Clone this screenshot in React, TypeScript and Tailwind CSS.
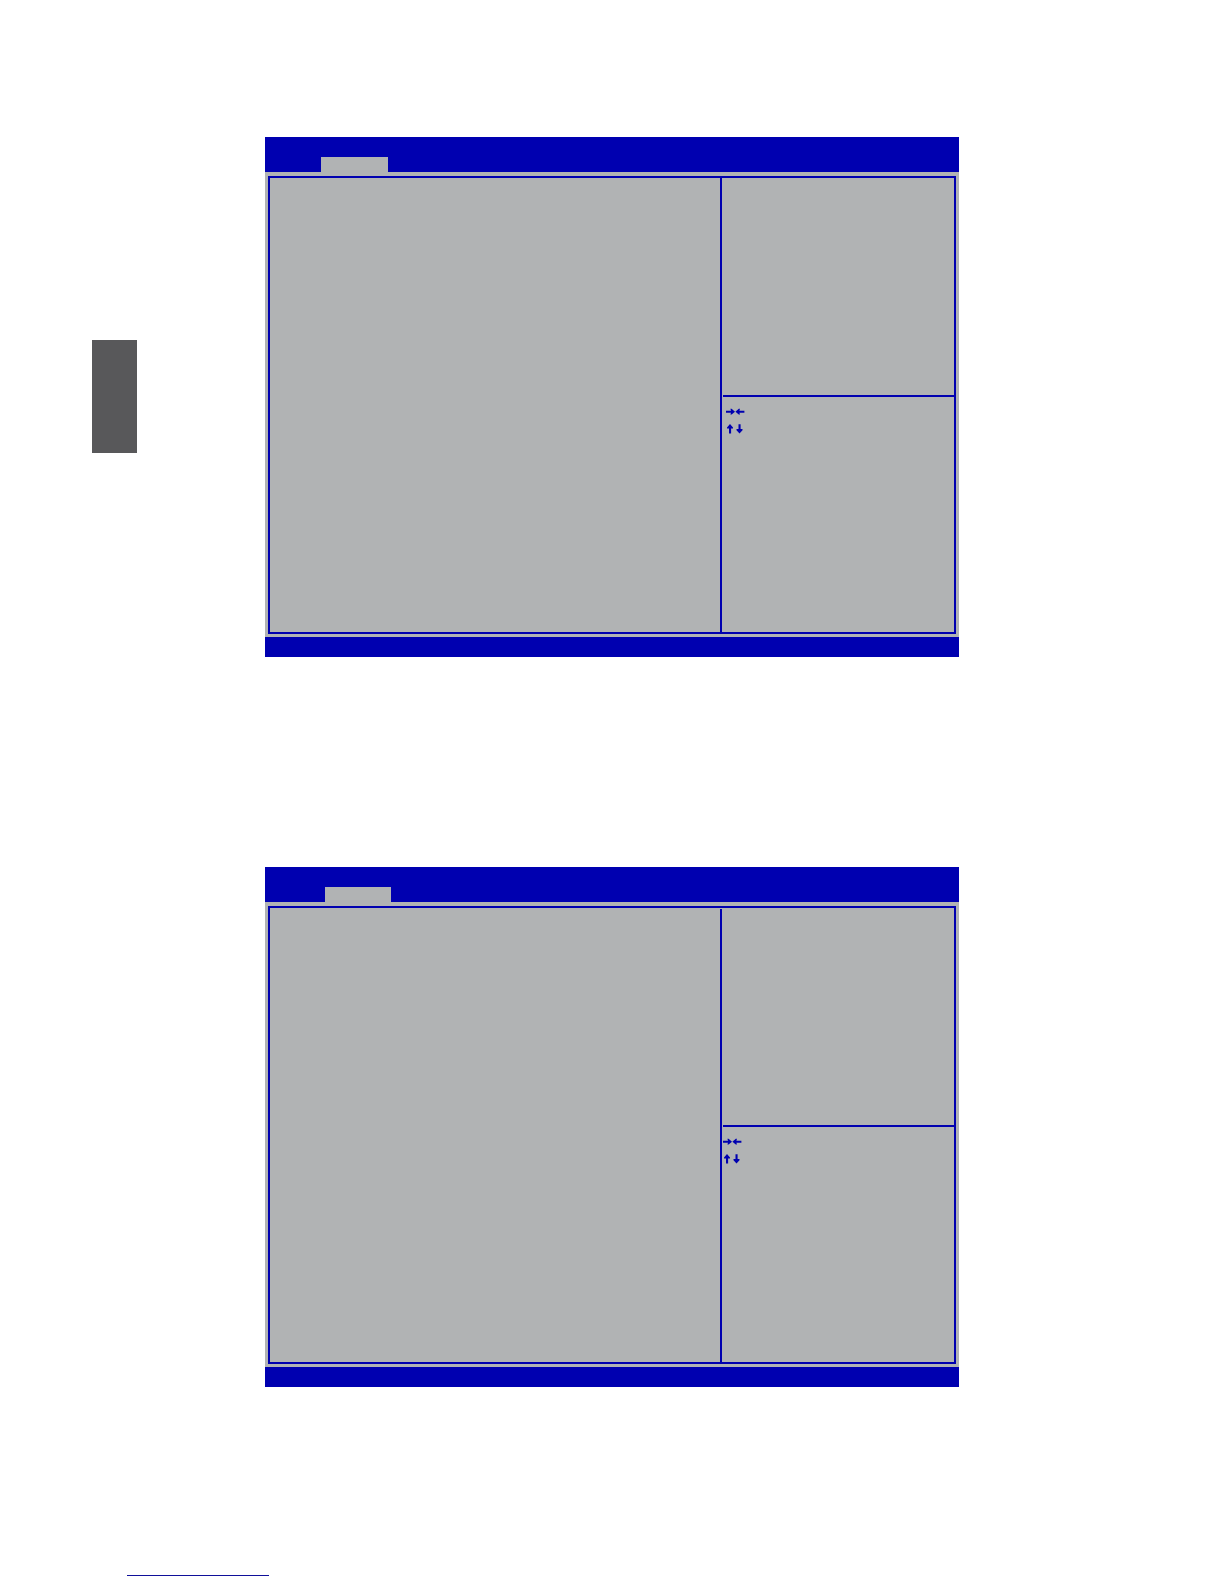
interface ScreenProps {
  tabClass: string;
  asideClass: string;
  legendClass: string;
}

function KeyArrows() {
  return (
    <div className="flex flex-col gap-2 text-[#0000b0]">
      <svg width="19" height="8" viewBox="0 0 19 8" fill="currentColor" aria-hidden="true">
        <path d="M0 2.7h5L4.4.8h1.2L9 3.7 5.6 6.6H4.4L5 4.7H0z" />
        <path d="M18.4 2.7h-5l.6-1.9h-1.2L9.4 3.7l3.4 2.9H14l-.6-1.9h5z" />
      </svg>
      <svg width="19" height="10" viewBox="0 0 19 10" fill="currentColor" aria-hidden="true">
        <path d="M4 0 7 3.4v1.2H5.1v4.8H3V4.6H1V3.4z" />
        <path d="M13.5 9.6l-3-3.4V5h2V.2h2.1V5h1.9v1.2z" />
      </svg>
    </div>
  );
}

function SetupScreen({ tabClass, asideClass, legendClass }: ScreenProps) {
  return (
    <section className="bg-[#b1b3b4]">
      <header className="flex h-[35px] items-end bg-[#0000b0]">
        <div className={`h-[15px] bg-[#b1b3b4] ${tabClass}`} />
      </header>

      <div className="px-[3px] pt-1 pb-[3px]">
        <div className="flex min-h-[458px] border-2 border-[#0000b0]">
          <div className="flex-1" />
          <aside className={`flex w-[234px] shrink-0 flex-col border-l-2 border-[#0000b0] ${asideClass}`}>
            <div className="flex-1" />
            <div className={`ml-px min-h-[237px] border-t-2 border-[#0000b0] pt-[11px] ${legendClass}`}>
              <KeyArrows />
            </div>
          </aside>
        </div>
      </div>

      <footer className="h-5 bg-[#0000b0]" />
    </section>
  );
}

export default function App() {
  return (
    <div className="min-h-screen bg-white">
      <div className="flex pt-[137px]">
        <div className="w-[265px] shrink-0 pt-[203px] pl-[92px]">
          <div className="h-[113px] w-[45px] bg-[#58585a]" />
        </div>

        <main className="flex flex-1 flex-col gap-[210px]">
          <SetupScreen tabClass="ml-14 w-[67px]" asideClass="" legendClass="pl-[3px]" />
          <SetupScreen tabClass="ml-[60px] w-[66px]" asideClass="mt-px" legendClass="" />
        </main>

        <div className="w-[265px] shrink-0" />
      </div>

      <div className="mt-[188px] mb-2 ml-[127px] h-px w-[142px] bg-[#10109a]" />
    </div>
  );
}
